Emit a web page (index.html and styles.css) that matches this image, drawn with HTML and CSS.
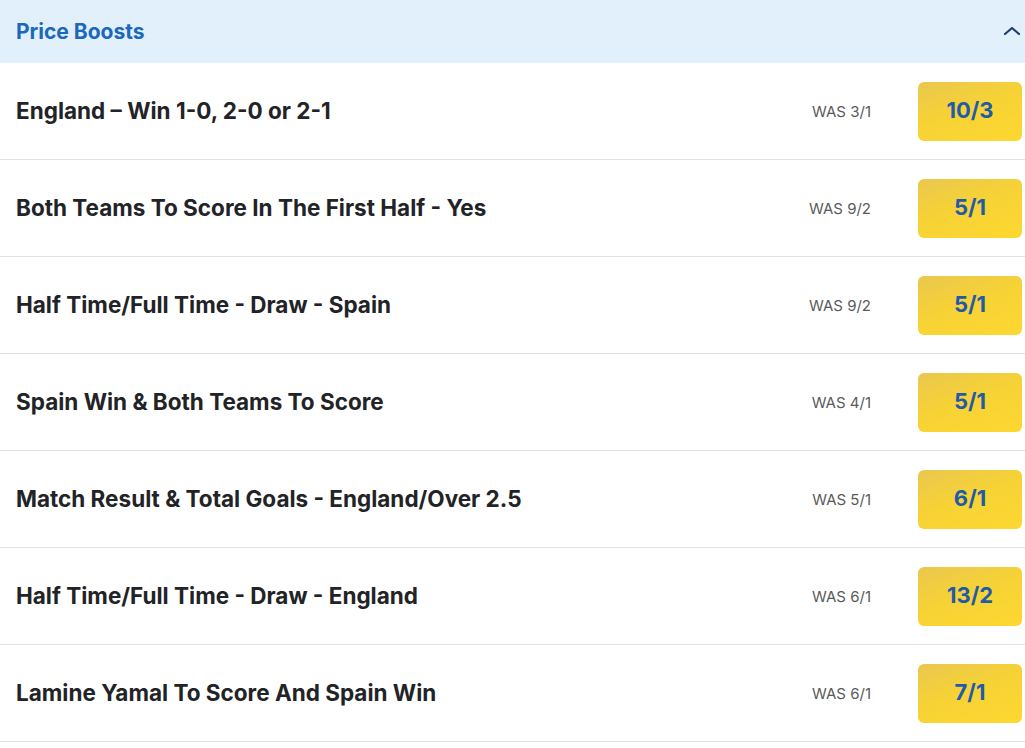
FILE: index.html
```html
<!DOCTYPE html>
<html>
<head>
<meta charset="utf-8">
<link rel="stylesheet" href="styles.css">
</head>
<body>
<section class="boosts">
  <header class="boosts-head">
    <h2 class="boosts-title">Price Boosts</h2>
    <svg class="chevron" width="18" height="12" viewBox="0 0 18 12"><path d="M2 9 L9 3 L16 9" fill="none" stroke="#1d3f6e" stroke-width="2.2" stroke-linecap="round" stroke-linejoin="round"/></svg>
  </header>
  <div class="row"><span class="name">England – Win 1-0, 2-0 or 2-1</span><span class="was">WAS 3/1</span><button class="odds">10/3</button></div>
  <div class="row"><span class="name">Both Teams To Score In The First Half - Yes</span><span class="was">WAS 9/2</span><button class="odds">5/1</button></div>
  <div class="row"><span class="name">Half Time/Full Time - Draw - Spain</span><span class="was">WAS 9/2</span><button class="odds">5/1</button></div>
  <div class="row"><span class="name">Spain Win &amp; Both Teams To Score</span><span class="was">WAS 4/1</span><button class="odds">5/1</button></div>
  <div class="row"><span class="name">Match Result &amp; Total Goals - England/Over 2.5</span><span class="was">WAS 5/1</span><button class="odds">6/1</button></div>
  <div class="row"><span class="name">Half Time/Full Time - Draw - England</span><span class="was">WAS 6/1</span><button class="odds">13/2</button></div>
  <div class="row"><span class="name">Lamine Yamal To Score And Spain Win</span><span class="was">WAS 6/1</span><button class="odds">7/1</button></div>
</section>
</body>
</html>
```
FILE: styles.css
```css
html, body { margin: 0; padding: 0; background: #fff; }
body { font-family: Inter, "Noto Sans", sans-serif; }
.boosts-head {
  height: 63px;
  background: #e1f0fb;
  display: flex;
  align-items: center;
  justify-content: space-between;
  padding: 0 3px 0 16px;
  box-sizing: border-box;
}
.boosts-title {
  margin: 0;
  font-size: 21px;
  font-weight: 700;
  color: #1b68bd;
}
.chevron { margin-right: 1px; margin-top: -1px; }
.row {
  height: 97px;
  box-sizing: border-box;
  border-bottom: 1px solid #e2e2e2;
  display: flex;
  align-items: center;
  padding: 0 3px 0 16px;
}
.name {
  flex: 1;
  font-size: 22.5px;
  font-weight: 700;
  color: #222326;
  margin-top: -1px;
}
.was {
  font-size: 15px;
  color: #5a5a5a;
  margin-right: 47px;
}
.odds {
  width: 104px;
  height: 59px;
  border: none;
  border-radius: 6px;
  background: linear-gradient(160deg, #eac74f 0%, #f6d236 45%, #fdd830 100%);
  font-family: Inter, "Noto Sans", sans-serif;
  font-size: 22px;
  font-weight: 700;
  color: #1f5ba8;
  padding: 0 0 2px;
}
```
